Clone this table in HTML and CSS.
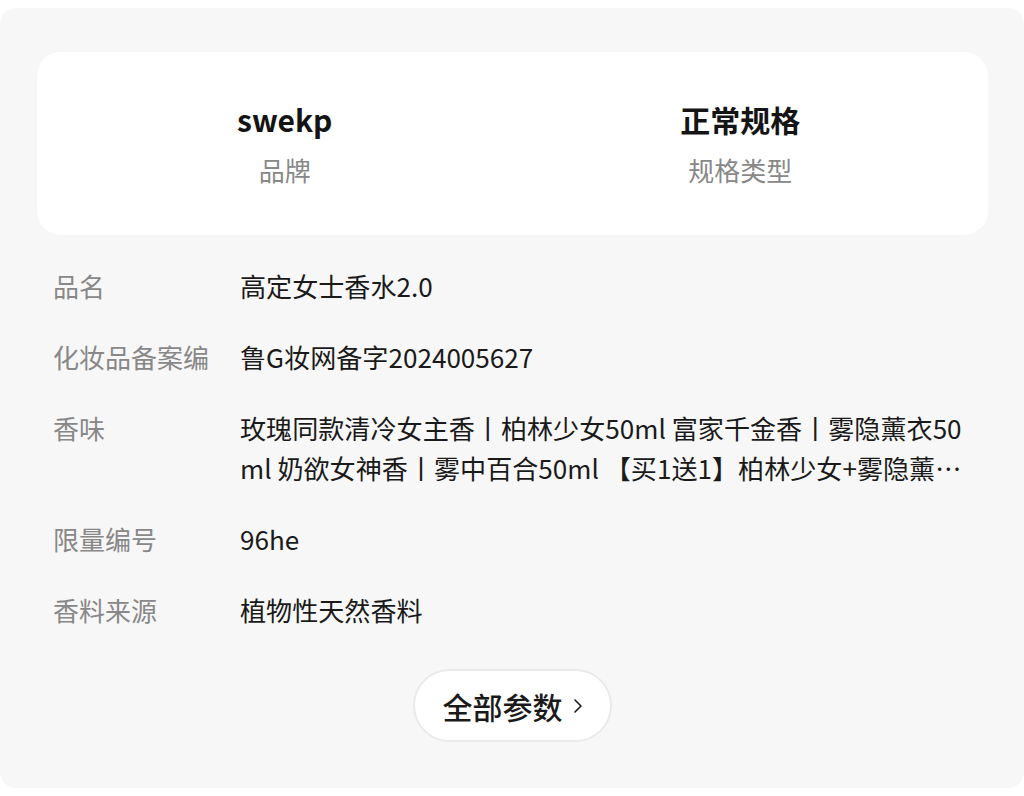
FILE: index.html
```html
<!DOCTYPE html>
<html lang="zh-CN">
<head>
<meta charset="utf-8">
<title>参数</title>
<link rel="stylesheet" href="styles.css">
</head>
<body>
<div class="panel">
  <div class="summary">
    <div class="summary-item">
      <div class="summary-value">swekp</div>
      <div class="summary-label">品牌</div>
    </div>
    <div class="summary-item">
      <div class="summary-value">正常规格</div>
      <div class="summary-label">规格类型</div>
    </div>
  </div>
  <div class="params">
    <div class="param-label">品名</div>
    <div class="param-value">高定女士香水2.0</div>
    <div class="param-label">化妆品备案编</div>
    <div class="param-value">鲁G妆网备字2024005627</div>
    <div class="param-label">香味</div>
    <div class="param-value clamp">玫瑰同款清冷女主香丨柏林少女50ml 富家千金香丨雾隐薰衣50ml 奶欲女神香丨雾中百合50ml 【买1送1】柏林少女+雾隐薰衣草 【买1送1】富家千金+奶欲女神</div>
    <div class="param-label">限量编号</div>
    <div class="param-value">96he</div>
    <div class="param-label">香料来源</div>
    <div class="param-value">植物性天然香料</div>
  </div>
  <div class="more-wrap">
    <button class="more-btn">全部参数<svg class="chev" width="10" height="16" viewBox="0 0 10 16"><polyline points="2,2 8,8 2,14" fill="none" stroke="#1a1a1a" stroke-width="1.6" stroke-linecap="round" stroke-linejoin="round"/></svg></button>
  </div>
</div>
</body>
</html>
```
FILE: styles.css
```css
* { box-sizing: border-box; }
html, body { margin: 0; padding: 0; background: #ffffff; }
body {
  padding-top: 8px;
  font-family: "Noto Sans CJK SC", "Noto Sans", sans-serif;
}
.panel {
  width: 1024px;
  height: 780px;
  background: #f7f7f7;
  border-radius: 16px;
  padding: 44px 36px 0 37px;
}
.summary {
  background: #ffffff;
  border-radius: 24px;
  height: 183px;
  padding: 46px 20px 0 20px;
  display: grid;
  grid-template-columns: 1fr 1fr;
}
.summary-item {
  display: flex;
  flex-direction: column;
  align-items: center;
}
.summary-value {
  font-size: 30px;
  font-weight: 700;
  line-height: 42px;
  color: #141414;
}
.summary-label {
  margin-top: 10px;
  font-size: 26px;
  line-height: 40px;
  color: #888888;
}
.params {
  margin-top: 31px;
  padding: 0 20px 0 16px;
  display: grid;
  grid-template-columns: 187px 1fr;
  row-gap: 31px;
  font-size: 26.1px;
  line-height: 40px;
}
.param-label { color: #888888; font-size: 26px; }
.param-value { color: #1a1a1a; word-break: break-all; }
.clamp {
  display: -webkit-box;
  -webkit-box-orient: vertical;
  -webkit-line-clamp: 2;
  overflow: hidden;
}
.more-wrap {
  margin-top: 39px;
  display: flex;
  justify-content: center;
}
.more-btn {
  height: 73px;
  width: 199px;
  border-radius: 37px;
  border: 2px solid #eaeaea;
  background: #ffffff;
  font-family: "Noto Sans CJK SC", "Noto Sans", sans-serif;
  font-size: 30px;
  font-weight: 500;
  color: #1a1a1a;
  display: flex;
  align-items: center;
  justify-content: center;
  gap: 10px;
  padding: 0;
}
.chev { display: block; }
```
